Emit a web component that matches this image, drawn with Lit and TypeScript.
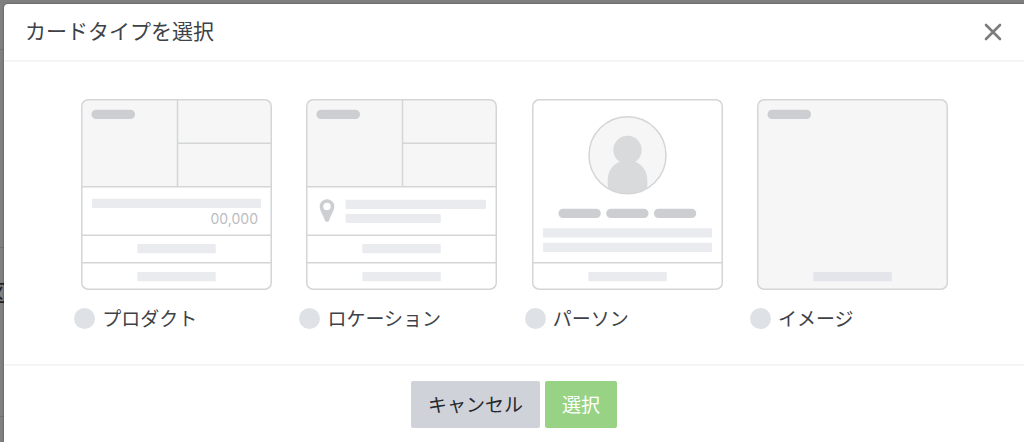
import { LitElement, html, css, svg } from "lit";
import { customElement, state } from "lit/decorators.js";

type CardType = "product" | "location" | "person" | "image";

const OPTIONS: { id: CardType; label: string }[] = [
  { id: "product", label: "プロダクト" },
  { id: "location", label: "ロケーション" },
  { id: "person", label: "パーソン" },
  { id: "image", label: "イメージ" },
];

const tiles = svg`
  <path class="tile" d="M1 88V7a6 6 0 0 1 6-6h177a6 6 0 0 1 6 6v81z" />
  <rect class="pill" x="10.5" y="10.7" width="43.5" height="9.3" rx="4.6" />
  <path class="line" d="M96.5 1v87M96.5 44.2H190M1 87.7h189M1 136.2h189M1 163.7h189" />
  <rect class="bar" x="56.3" y="145" width="78.5" height="9.3" rx="1" />
  <rect class="bar" x="56.3" y="173" width="78.5" height="9.3" rx="1" />
`;

const frame = svg`<rect class="line" x=".75" y=".75" width="189.5" height="189.5" rx="6.5" />`;

const drawings = {
  product: svg`
    ${tiles}
    <rect class="bar" x="11" y="99.7" width="169" height="9.3" rx="1" />
    <text class="price" x="177" y="125" text-anchor="end">00,000</text>
    ${frame}`,
  location: svg`
    ${tiles}
    <path class="pin" fill-rule="evenodd"
      d="M21 100.2a7.3 7.3 0 0 0-7.3 7.3c0 4.2 3 7.6 4.9 13.2.6 1.700 1.200 2.100 2.400 2.100s1.800-.4 2.400-2.100c1.900-5.600 4.900-9 4.900-13.200a7.300 7.300 0 0 0-7.300-7.300zm0 3.600a3.700 3.700 0 1 1 0 7.400 3.700 3.700 0 0 1 0-7.400z" />
    <rect class="bar" x="39.5" y="100.7" width="140.5" height="9.3" rx="1" />
    <rect class="bar" x="39.5" y="115" width="95.3" height="9" rx="1" />
    ${frame}`,
  person: svg`
    <clipPath id="avatar"><circle cx="95.5" cy="56.3" r="38.5" /></clipPath>
    <circle class="tile" cx="95.5" cy="56.3" r="38.5" />
    <g class="figure" clip-path="url(#avatar)">
      <circle cx="95.5" cy="51" r="14.2" />
      <path d="M75.7 100V81c0-9 5-15.500 12.500-18.500h14.600c7.500 3 12.500 9.500 12.500 18.500v19z" />
    </g>
    <circle class="line" cx="95.5" cy="56.3" r="38.5" />
    <rect class="pill" x="26.5" y="109.7" width="42.3" height="9.3" rx="4.6" />
    <rect class="pill" x="74.2" y="109.7" width="42.3" height="9.3" rx="4.6" />
    <rect class="pill" x="121.9" y="109.7" width="42.3" height="9.3" rx="4.6" />
    <rect class="bar" x="11" y="129.3" width="169" height="9.3" rx="1" />
    <rect class="bar" x="11" y="143.7" width="169" height="9.3" rx="1" />
    <path class="line" d="M1 163.7h189" />
    <rect class="bar" x="56.3" y="173" width="78.5" height="9.3" rx="1" />
    ${frame}`,
  image: svg`
    <rect class="tile" x="1" y="1" width="189" height="189" rx="6" />
    <rect class="pill" x="10.5" y="10.7" width="43.5" height="9.3" rx="4.6" />
    <rect class="bar deep" x="56.3" y="173" width="78.5" height="9.3" rx="1" />
    ${frame}`,
};

@customElement("card-preview")
export class CardPreview extends LitElement {
  static properties = { type: {} };
  declare type: CardType;

  static styles = css`
    :host { display: block; }
    .drawing { display: block; width: 191px; height: 191px; }
    .tile { fill: #f6f6f6; }
    .line { fill: none; stroke: #d4d5d7; stroke-width: 1.5; }
    .bar { fill: #e9ebef; }
    .deep { fill: #e3e5ea; }
    .pill { fill: #cdced2; }
    .pin { fill: #cdced2; }
    .figure { fill: #d8dadc; }
    .price { font: 14px Inter, "Liberation Sans", sans-serif; fill: #bbbcbe; }
  `;

  render() {
    return html`<svg class="drawing" viewBox="0 0 191 191" aria-hidden="true">${drawings[this.type]}</svg>`;
  }
}

@customElement("app-root")
export class AppRoot extends LitElement {
  @state() selected: CardType | null = null;

  static styles = css`
    :host {
      display: block;
      font-family: "Noto Sans CJK JP", sans-serif;
      color: #3e4247;
    }
    .backdrop {
      position: relative;
      box-sizing: border-box;
      min-height: 100vh;
      padding: 4px 0 0 4px;
      background: #808080;
      display: flex;
      overflow: hidden;
    }
    /* The page that lies under the dialog. */
    .behind { position: absolute; inset: 0; }
    .rule {
      position: absolute;
      left: 0;
      width: 100%;
      height: 1px;
      background: #737373;
    }
    .rule-top { top: 49px; }
    .rule-middle { top: 247px; }
    .rule-bottom { top: 416px; }
    .behind-text {
      position: absolute;
      left: -16px;
      top: 276px;
      font-size: 24px;
      line-height: 32px;
      color: #1f2022;
    }
    .dialog {
      position: relative;
      flex: 1;
      display: flex;
      flex-direction: column;
      background: #fff;
      border-radius: 4px 0 0 0;
      box-shadow: 0 0 2px rgba(0, 0, 0, 0.5);
    }
    .header {
      display: flex;
      align-items: center;
      justify-content: space-between;
      height: 56px;
      padding: 0 22px 0 21px;
      border-bottom: 2px solid #f5f5f5;
    }
    .title { margin: 0; padding-bottom: 4px; font-size: 21px; line-height: 30px; font-weight: 400; }
    .close { padding: 0; border: 0; background: none; display: flex; }
    .close-icon { width: 18px; height: 18px; }
    .options {
      display: grid;
      grid-template-columns: repeat(4, 1fr);
      padding: 37px 59px 30px 60px;
    }
    .option { display: flex; flex-direction: column; align-items: center; gap: 12px; }
    .choice {
      width: 205px;
      display: flex;
      align-items: center;
      gap: 7px;
      font-size: 19px;
      line-height: 32px;
    }
    .radio {
      appearance: none;
      width: 21px;
      height: 21px;
      margin: 0;
      border-radius: 50%;
      background: #dee2e7;
    }
    .radio:checked { border: 6px solid #98d385; background: #fff; }
    .footer {
      display: flex;
      justify-content: center;
      gap: 5px;
      padding: 15px 0 14px;
      border-top: 2px solid #f5f5f5;
    }
    .button {
      height: 47px;
      padding: 0 17px 2px;
      border: 0;
      border-radius: 2px;
      font: inherit;
      font-size: 19px;
      line-height: 28px;
    }
    .cancel { background: #cfd2d8; color: #25282c; }
    .submit { background: #98d385; color: #fff; }
  `;

  render() {
    return html`
      <div class="backdrop">
        <div class="behind" aria-hidden="true">
          <div class="rule rule-top"></div>
          <div class="rule rule-middle"></div>
          <div class="rule rule-bottom"></div>
          <span class="behind-text">図</span>
        </div>
        <section class="dialog" role="dialog" aria-labelledby="title">
          <header class="header">
            <h1 class="title" id="title">カードタイプを選択</h1>
            <button class="close" aria-label="閉じる">
              <svg class="close-icon" viewBox="0 0 18 18" fill="none" stroke="#7c7c7c" stroke-width="2.6" stroke-linecap="round">
                <path d="M2 2l14 14M16 2L2 16" />
              </svg>
            </button>
          </header>
          <div class="options" role="radiogroup" aria-labelledby="title">
            ${OPTIONS.map(
              (o) => html`
                <label class="option">
                  <card-preview .type=${o.id}></card-preview>
                  <span class="choice">
                    <input
                      class="radio"
                      type="radio"
                      name="card-type"
                      .checked=${this.selected === o.id}
                      @change=${() => (this.selected = o.id)}
                    />
                    ${o.label}
                  </span>
                </label>
              `
            )}
          </div>
          <footer class="footer">
            <button class="button cancel">キャンセル</button>
            <button class="button submit">選択</button>
          </footer>
        </section>
      </div>
    `;
  }
}
